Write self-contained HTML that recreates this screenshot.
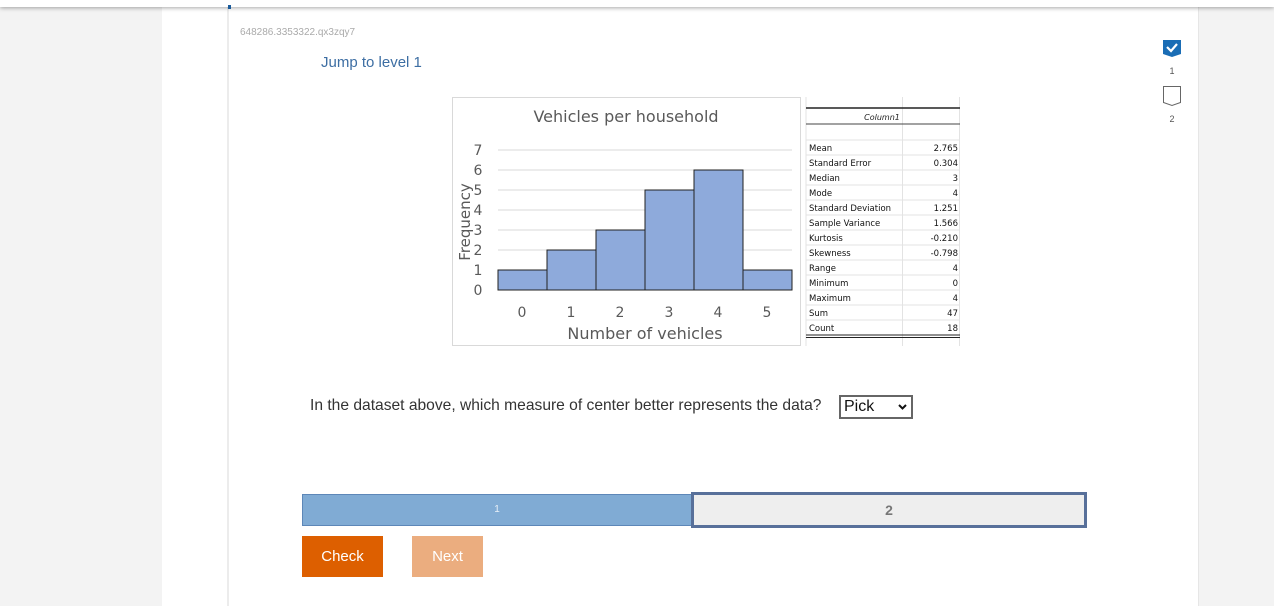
<!DOCTYPE html>
<html><head><style>
body{margin:0;width:1274px;height:606px;background:#f3f3f3;position:relative;overflow:hidden;font-family:"Liberation Sans",sans-serif}
.abs{position:absolute}
</style></head><body>
<div class="abs" style="left:162px;top:0;width:1036px;height:606px;background:#fff"></div>
<div class="abs" style="left:227px;top:0;width:2px;height:606px;background:#ececec"></div>
<div class="abs" style="left:1198px;top:0;width:76px;height:606px;background:#f3f3f3;border-left:1px solid #e6e6e6"></div>
<div class="abs" style="left:0;top:0;width:1274px;height:7px;background:#fff;box-shadow:0 1px 4px rgba(0,0,0,.35)"></div>
<div class="abs" style="left:228px;top:5px;width:3px;height:4px;background:#1a5a9a"></div>
<div class="abs" style="left:240px;top:27px;font-size:10px;color:#aaa">648286.3353322.qx3zqy7</div>
<div class="abs" style="left:321px;top:54px;font-size:15px;color:#3d6ea3">Jump to level 1</div>

<svg class="abs" style="left:1160px;top:38px" width="30" height="90">
<path d="M3 2h18v14l-9 3-9-3z" fill="#1a6db5"/>
<path d="M7 9l4 4 6-7" stroke="#fff" stroke-width="2.2" fill="none"/>
<text x="12" y="36" font-size="9" fill="#555" text-anchor="middle" font-family="Liberation Sans">1</text>
<path d="M3.5 48.5h17v16l-8.5 3-8.5-3z" fill="#fff" stroke="#666"/>
<text x="12" y="84" font-size="9" fill="#555" text-anchor="middle" font-family="Liberation Sans">2</text>
</svg>

<svg class="abs" style="left:0;top:0" width="1274" height="360" font-family="DejaVu Sans, Liberation Sans, sans-serif">
<rect x="452.5" y="97.5" width="348" height="248" fill="#fff" stroke="#d9d9d9"/>
<text x="626" y="122" font-size="16" fill="#595959" text-anchor="middle">Vehicles per household</text>
<g stroke="#d9d9d9">
<line x1="498" y1="150" x2="792" y2="150"/><line x1="498" y1="170" x2="792" y2="170"/><line x1="498" y1="190" x2="792" y2="190"/><line x1="498" y1="210" x2="792" y2="210"/><line x1="498" y1="230" x2="792" y2="230"/><line x1="498" y1="250" x2="792" y2="250"/><line x1="498" y1="270" x2="792" y2="270"/><line x1="498" y1="290" x2="792" y2="290"/>
</g>
<g fill="#8eaadb" stroke="#222" stroke-width="1">
<rect x="498" y="270" width="49" height="20"/><rect x="547" y="250" width="49" height="40"/><rect x="596" y="230" width="49" height="60"/><rect x="645" y="190" width="49" height="100"/><rect x="694" y="170" width="49" height="120"/><rect x="743" y="270" width="49" height="20"/>
</g>
<g font-size="14" fill="#595959" text-anchor="middle">
<text x="478" y="155">7</text><text x="478" y="175">6</text><text x="478" y="195">5</text><text x="478" y="215">4</text><text x="478" y="235">3</text><text x="478" y="255">2</text><text x="478" y="275">1</text><text x="478" y="295">0</text>
<text x="522" y="317">0</text><text x="571" y="317">1</text><text x="620" y="317">2</text><text x="669" y="317">3</text><text x="718" y="317">4</text><text x="767" y="317">5</text>
<text x="645" y="339" font-size="16">Number of vehicles</text>
<text transform="translate(470,222) rotate(-90)" font-size="15">Frequency</text>
</g>
<g stroke="#e3e3e3"><line x1="806" y1="97" x2="806" y2="346"/><line x1="902.5" y1="97" x2="902.5" y2="346"/><line x1="959.5" y1="97" x2="959.5" y2="346"/>
<line x1="806" y1="140" x2="960" y2="140"/><line x1="806" y1="155" x2="960" y2="155"/><line x1="806" y1="170" x2="960" y2="170"/><line x1="806" y1="185" x2="960" y2="185"/><line x1="806" y1="200" x2="960" y2="200"/><line x1="806" y1="215" x2="960" y2="215"/><line x1="806" y1="230" x2="960" y2="230"/><line x1="806" y1="245" x2="960" y2="245"/><line x1="806" y1="260" x2="960" y2="260"/><line x1="806" y1="275" x2="960" y2="275"/><line x1="806" y1="290" x2="960" y2="290"/><line x1="806" y1="305" x2="960" y2="305"/><line x1="806" y1="320" x2="960" y2="320"/></g>
<line x1="806" y1="108" x2="960" y2="108" stroke="#222" stroke-width="1.5"/>
<line x1="806" y1="124" x2="960" y2="124" stroke="#444" stroke-width="1"/>
<line x1="806" y1="335" x2="960" y2="335" stroke="#222" stroke-width="1"/>
<line x1="806" y1="337.5" x2="960" y2="337.5" stroke="#222" stroke-width="1"/>
<text x="882" y="120" font-size="8" font-style="italic" fill="#222" text-anchor="middle">Column1</text>
<g font-size="8.5" fill="#111">
<text x="809" y="151">Mean</text><text x="809" y="166">Standard Error</text><text x="809" y="181">Median</text><text x="809" y="196">Mode</text><text x="809" y="211">Standard Deviation</text><text x="809" y="226">Sample Variance</text><text x="809" y="241">Kurtosis</text><text x="809" y="256">Skewness</text><text x="809" y="271">Range</text><text x="809" y="286">Minimum</text><text x="809" y="301">Maximum</text><text x="809" y="316">Sum</text><text x="809" y="331">Count</text>
</g>
<g font-size="8.5" fill="#111" text-anchor="end">
<text x="958" y="151">2.765</text><text x="958" y="166">0.304</text><text x="958" y="181">3</text><text x="958" y="196">4</text><text x="958" y="211">1.251</text><text x="958" y="226">1.566</text><text x="958" y="241">-0.210</text><text x="958" y="256">-0.798</text><text x="958" y="271">4</text><text x="958" y="286">0</text><text x="958" y="301">4</text><text x="958" y="316">47</text><text x="958" y="331">18</text>
</g>
</svg>

<div class="abs" style="left:310px;top:397px;font-size:15.6px;color:#333">In the dataset above, which measure of center better represents the data?</div>
<div class="abs" style="left:839px;top:395px;width:70px;height:20px;border:2px solid #666;box-sizing:content-box;background:#fff;font-size:16px;color:#111"><span style="position:absolute;left:3px;top:1px">Pick</span>
<svg style="position:absolute;right:4px;top:6px" width="9" height="8"><path d="M1 2l3.5 3.5L8 2" stroke="#111" stroke-width="2" fill="none"/></svg></div>
<div class="abs" style="left:302px;top:494px;width:388px;height:30px;background:#80abd4;border:1px solid #5d87b8;color:#e8f0f8;font-size:10px;text-align:center;line-height:30px">1</div>
<div class="abs" style="left:691px;top:492px;width:390px;height:30px;background:#eee;border:3px solid #58709a;color:#777;font-size:14px;font-weight:bold;text-align:center;line-height:30px">2</div>
<div class="abs" style="left:302px;top:536px;width:81px;height:41px;background:#dd5f00;color:#fff;font-size:15px;text-align:center;line-height:41px">Check</div>
<div class="abs" style="left:412px;top:536px;width:71px;height:41px;background:#ebad7f;color:#fff;font-size:15px;text-align:center;line-height:41px">Next</div>
</body></html>
